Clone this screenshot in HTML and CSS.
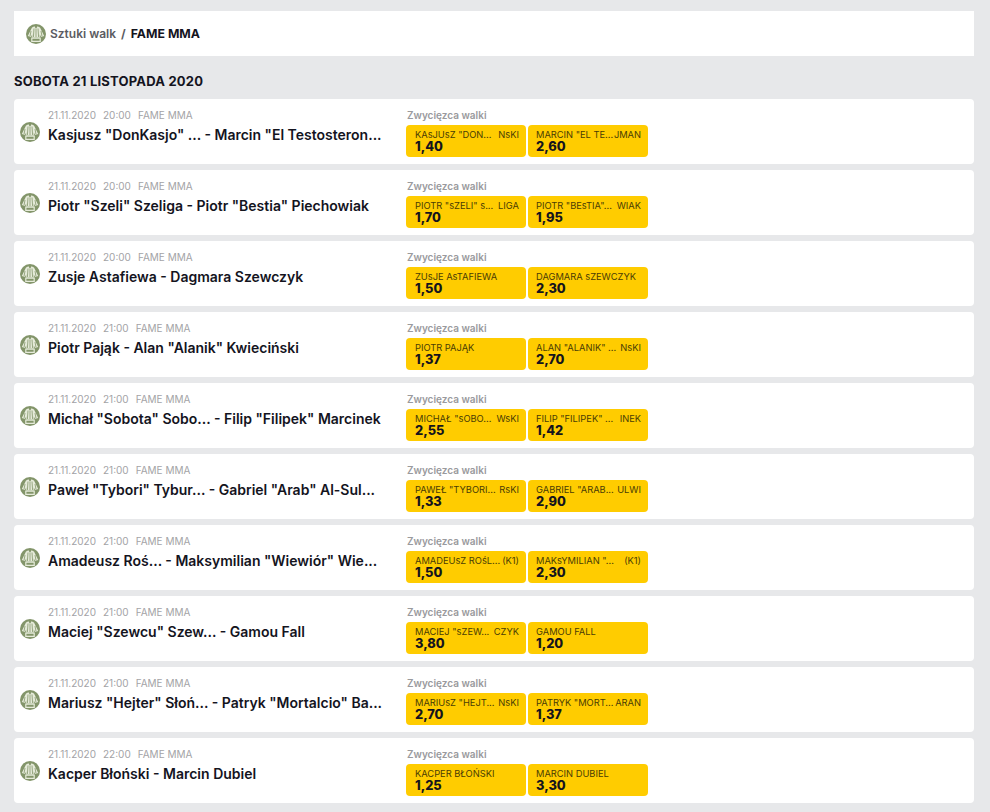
FILE: index.html
```html
<!DOCTYPE html>
<html lang="pl">
<head>
    <meta charset="UTF-8">
    <title>FAME MMA</title>
    <link rel="stylesheet" href="styles.css">
</head>
<body>
    <svg class="sprite" width="0" height="0">
        <symbol id="mma" viewBox="0 0 20 20">
            <circle cx="10" cy="10" r="10" fill="#83956a"/>
            <path d="M1.8 12 6 3.6 8.5 2.2 10 5 11.5 2.2 14 3.6 18.2 12 15 13 13.8 10.5V13.4H6.2V10.5L5 13Z" fill="#e6ebda"/>
            <path d="M10 5V13.4M8 4.5 7.4 13M12 4.5 12.6 13M5 7 4 12.4M15 7 16 12.4" fill="none" stroke="#83956a" stroke-width=".8"/>
            <path d="M5.8 14.2H14.2V17.4H5.8Z" fill="none" stroke="#e6ebda" stroke-width="1.2"/>
        </symbol>
    </svg>

    <div class="breadcrumb">
        <svg class="icon"><use href="#mma"/></svg>
        <span class="crumb-link">Sztuki walk</span>
        <span class="crumb-sep">/</span>
        <strong>FAME MMA</strong>
    </div>

    <h2 class="day">SOBOTA 21 LISTOPADA 2020</h2>

    <div class="match">
        <svg class="icon"><use href="#mma"/></svg>
        <div class="info">
            <div class="meta"><span>21.11.2020</span><span>20:00</span><span>FAME MMA</span></div>
            <div class="title">Kasjusz "DonKasjo" ... - Marcin "El Testosteron...</div>
        </div>
        <div class="market">
            <div class="market-name">Zwycięzca walki</div>
            <div class="odds">
                <div class="odd"><div class="who"><span>KAsJUsZ "DON...</span><span>NsKI</span></div><b>1,40</b></div>
                <div class="odd"><div class="who"><span>MARCIN "EL TE...</span><span>JMAN</span></div><b>2,60</b></div>
            </div>
        </div>
    </div>

    <div class="match">
        <svg class="icon"><use href="#mma"/></svg>
        <div class="info">
            <div class="meta"><span>21.11.2020</span><span>20:00</span><span>FAME MMA</span></div>
            <div class="title">Piotr "Szeli" Szeliga - Piotr "Bestia" Piechowiak</div>
        </div>
        <div class="market">
            <div class="market-name">Zwycięzca walki</div>
            <div class="odds">
                <div class="odd"><div class="who"><span>PIOTR "sZELI" s...</span><span>LIGA</span></div><b>1,70</b></div>
                <div class="odd"><div class="who"><span>PIOTR "BEsTIA"...</span><span>WIAK</span></div><b>1,95</b></div>
            </div>
        </div>
    </div>

    <div class="match">
        <svg class="icon"><use href="#mma"/></svg>
        <div class="info">
            <div class="meta"><span>21.11.2020</span><span>20:00</span><span>FAME MMA</span></div>
            <div class="title">Zusje Astafiewa - Dagmara Szewczyk</div>
        </div>
        <div class="market">
            <div class="market-name">Zwycięzca walki</div>
            <div class="odds">
                <div class="odd"><div class="who"><span>ZUsJE AsTAFIEWA</span></div><b>1,50</b></div>
                <div class="odd"><div class="who"><span>DAGMARA sZEWCZYK</span></div><b>2,30</b></div>
            </div>
        </div>
    </div>

    <div class="match">
        <svg class="icon"><use href="#mma"/></svg>
        <div class="info">
            <div class="meta"><span>21.11.2020</span><span>21:00</span><span>FAME MMA</span></div>
            <div class="title">Piotr Pająk - Alan "Alanik" Kwieciński</div>
        </div>
        <div class="market">
            <div class="market-name">Zwycięzca walki</div>
            <div class="odds">
                <div class="odd"><div class="who"><span>PIOTR PAJĄK</span></div><b>1,37</b></div>
                <div class="odd"><div class="who"><span>ALAN "ALANIK" ...</span><span>NsKI</span></div><b>2,70</b></div>
            </div>
        </div>
    </div>

    <div class="match">
        <svg class="icon"><use href="#mma"/></svg>
        <div class="info">
            <div class="meta"><span>21.11.2020</span><span>21:00</span><span>FAME MMA</span></div>
            <div class="title">Michał "Sobota" Sobo... - Filip "Filipek" Marcinek</div>
        </div>
        <div class="market">
            <div class="market-name">Zwycięzca walki</div>
            <div class="odds">
                <div class="odd"><div class="who"><span>MICHAŁ "sOBO...</span><span>WsKI</span></div><b>2,55</b></div>
                <div class="odd"><div class="who"><span>FILIP "FILIPEK" ...</span><span>INEK</span></div><b>1,42</b></div>
            </div>
        </div>
    </div>

    <div class="match">
        <svg class="icon"><use href="#mma"/></svg>
        <div class="info">
            <div class="meta"><span>21.11.2020</span><span>21:00</span><span>FAME MMA</span></div>
            <div class="title">Paweł "Tybori" Tybur... - Gabriel "Arab" Al-Sul...</div>
        </div>
        <div class="market">
            <div class="market-name">Zwycięzca walki</div>
            <div class="odds">
                <div class="odd"><div class="who"><span>PAWEŁ "TYBORI...</span><span>RsKI</span></div><b>1,33</b></div>
                <div class="odd"><div class="who"><span>GABRIEL "ARAB...</span><span>ULWI</span></div><b>2,90</b></div>
            </div>
        </div>
    </div>

    <div class="match">
        <svg class="icon"><use href="#mma"/></svg>
        <div class="info">
            <div class="meta"><span>21.11.2020</span><span>21:00</span><span>FAME MMA</span></div>
            <div class="title">Amadeusz Roś... - Maksymilian "Wiewiór" Wie...</div>
        </div>
        <div class="market">
            <div class="market-name">Zwycięzca walki</div>
            <div class="odds">
                <div class="odd"><div class="who"><span>AMADEUsZ ROśL...</span><span>(K1)</span></div><b>1,50</b></div>
                <div class="odd"><div class="who"><span>MAKsYMILIAN "...</span><span>(K1)</span></div><b>2,30</b></div>
            </div>
        </div>
    </div>

    <div class="match">
        <svg class="icon"><use href="#mma"/></svg>
        <div class="info">
            <div class="meta"><span>21.11.2020</span><span>21:00</span><span>FAME MMA</span></div>
            <div class="title">Maciej "Szewcu" Szew... - Gamou Fall</div>
        </div>
        <div class="market">
            <div class="market-name">Zwycięzca walki</div>
            <div class="odds">
                <div class="odd"><div class="who"><span>MACIEJ "sZEW...</span><span>CZYK</span></div><b>3,80</b></div>
                <div class="odd"><div class="who"><span>GAMOU FALL</span></div><b>1,20</b></div>
            </div>
        </div>
    </div>

    <div class="match">
        <svg class="icon"><use href="#mma"/></svg>
        <div class="info">
            <div class="meta"><span>21.11.2020</span><span>21:00</span><span>FAME MMA</span></div>
            <div class="title">Mariusz "Hejter" Słoń... - Patryk "Mortalcio" Ba...</div>
        </div>
        <div class="market">
            <div class="market-name">Zwycięzca walki</div>
            <div class="odds">
                <div class="odd"><div class="who"><span>MARIUsZ "HEJT...</span><span>NsKI</span></div><b>2,70</b></div>
                <div class="odd"><div class="who"><span>PATRYK "MORT...</span><span>ARAN</span></div><b>1,37</b></div>
            </div>
        </div>
    </div>

    <div class="match">
        <svg class="icon"><use href="#mma"/></svg>
        <div class="info">
            <div class="meta"><span>21.11.2020</span><span>22:00</span><span>FAME MMA</span></div>
            <div class="title">Kacper Błoński - Marcin Dubiel</div>
        </div>
        <div class="market">
            <div class="market-name">Zwycięzca walki</div>
            <div class="odds">
                <div class="odd"><div class="who"><span>KACPER BŁOŃSKI</span></div><b>1,25</b></div>
                <div class="odd"><div class="who"><span>MARCIN DUBIEL</span></div><b>3,30</b></div>
            </div>
        </div>
    </div>
</body>
</html>
```

FILE: styles.css
```css
body {
    font-family: Inter, "Liberation Sans", sans-serif;
    background-color: #e7e8ea;
    color: #14141e;
    margin: 0;
    padding: 11px 16px 0 14px;
    overflow: hidden;
}

.sprite {
    display: block;
    position: absolute;
}

.icon {
    width: 20px;
    height: 20px;
    flex: none;
}

.breadcrumb {
    display: flex;
    align-items: center;
    height: 45px;
    padding-left: 12px;
    background: white;
    font-size: 12px;
    font-weight: 600;
}

.crumb-link {
    margin-left: 4px;
    color: #5c5c62;
}

.crumb-sep {
    margin: 0 5px 0 5px;
    color: #5c5c62;
    font-weight: 700;
}

.breadcrumb strong {
    font-size: 12.3px;
    font-weight: 700;
}

.day {
    margin: 18px 0 10px 0;
    font-size: 13px;
    line-height: 15px;
    font-weight: 700;
    letter-spacing: 0.2px;
}

.match {
    display: flex;
    height: 65px;
    margin-bottom: 6px;
    padding-left: 6px;
    box-sizing: border-box;
    background: white;
    border-radius: 4px;
}

.match .icon {
    margin-top: 23px;
}

.info {
    width: 358px;
    margin-left: 8px;
    padding-top: 10px;
    flex: none;
}

.meta {
    display: flex;
    gap: 7px;
    font-size: 10px;
    line-height: 12px;
    color: #a3a3a6;
}

.title {
    margin-top: 4px;
    font-size: 14px;
    line-height: 20px;
    font-weight: 600;
    white-space: nowrap;
}

.market {
    padding-top: 10px;
}

.market-name {
    margin-left: 1px;
    font-size: 10px;
    line-height: 13px;
    font-weight: 600;
    color: #9a9a9d;
}

.odds {
    display: flex;
    gap: 2px;
    margin-top: 3px;
}

.odd {
    width: 120px;
    height: 32px;
    padding: 4px 7px 0 9px;
    box-sizing: border-box;
    background-color: #ffcc00;
    border-radius: 4px;
}

.odd + .odd {
    padding-left: 8px;
}

.who {
    display: flex;
    justify-content: space-between;
    font-size: 9.3px;
    line-height: 11px;
    color: #4a3d05;
    white-space: nowrap;
}

.odd b {
    display: block;
    font-size: 12.8px;
    line-height: 14px;
    font-weight: 800;
}
```
